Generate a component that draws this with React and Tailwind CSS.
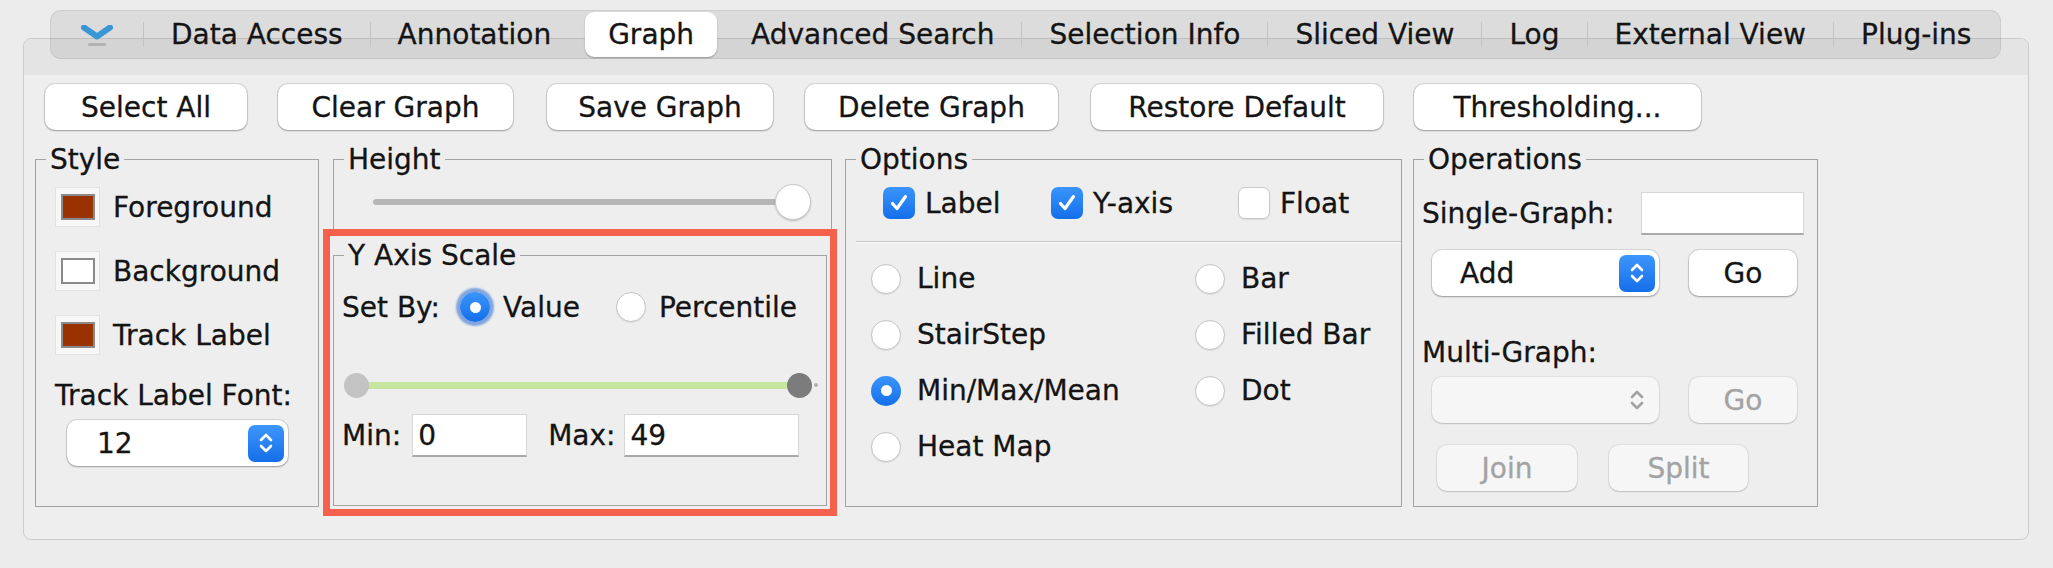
import React from 'react';

const TABS = ['Data Access', 'Annotation', 'Graph', 'Advanced Search', 'Selection Info', 'Sliced View', 'Log', 'External View', 'Plug-ins'];
const ACTIVE_TAB = 'Graph';

const ACTIONS = [
  { label: 'Select All', w: 'w-[202px]', ml: 'ml-0' },
  { label: 'Clear Graph', w: 'w-[235px]', ml: 'ml-[31px]' },
  { label: 'Save Graph', w: 'w-[226px]', ml: 'ml-[34px]' },
  { label: 'Delete Graph', w: 'w-[253px]', ml: 'ml-[32px]' },
  { label: 'Restore Default', w: 'w-[292px]', ml: 'ml-[33px]' },
  { label: 'Thresholding...', w: 'w-[287px]', ml: 'ml-[31px]' },
];

const GRAPH_TYPES = [
  ['Line', 'Bar'],
  ['StairStep', 'Filled Bar'],
  ['Min/Max/Mean', 'Dot'],
  ['Heat Map', null],
];

function Chevron() {
  return (
    <div className="flex flex-col items-center pt-[2px]">
      <svg width="32" height="15" viewBox="0 0 32 15">
        <path d="M3 2.5 L16 11.5 L29 2.5" fill="none" stroke="#3a97d4" strokeWidth="6" strokeLinejoin="round" strokeLinecap="round" />
      </svg>
      <div className="w-[18px] h-[3px] mt-[3px] rounded-full bg-[#b3b3b3]" />
    </div>
  );
}

function Sep() {
  return <div className="w-px h-[25px] bg-[#c3c3c3]" />;
}

function TabBar() {
  const items = [];
  TABS.forEach((t, i) => {
    const afterActive = i > 0 && TABS[i - 1] === ACTIVE_TAB;
    if (t !== ACTIVE_TAB && !afterActive) items.push(<Sep key={'s' + i} />);
    if (t === ACTIVE_TAB) {
      items.push(
        <div key={t} className="mx-[7px] h-[45px] px-[23px] flex items-center rounded-[9px] bg-white shadow-[0_1px_1.5px_rgba(0,0,0,0.3)]">
          {t}
        </div>
      );
    } else {
      items.push(
        <div key={t} className="px-[27px] h-full flex items-center whitespace-nowrap">
          {t}
        </div>
      );
    }
  });
  return (
    <div className="relative z-10 ml-[50px] w-[1951px] h-[49px] rounded-[11px] border border-black/[0.07] bg-black/[0.065] flex items-center">
      <div className="w-[92px] flex justify-center">
        <Chevron />
      </div>
      {items}
    </div>
  );
}

function Button({ children, className = '', disabled = false }) {
  return (
    <div
      className={`h-[46px] flex items-center justify-center rounded-[10px] ${
        disabled
          ? 'bg-[#f6f6f6] text-[#a3a3a3] shadow-[0_0_0_1px_rgba(0,0,0,0.06),0_1px_1.5px_rgba(0,0,0,0.14)]'
          : 'bg-white shadow-[0_0_0_1px_rgba(0,0,0,0.1),0_1px_2px_rgba(0,0,0,0.28)]'
      } ${className}`}
    >
      {children}
    </div>
  );
}

function Stepper({ disabled }) {
  return (
    <svg width="18" height="28" viewBox="0 0 18 28" fill="none" stroke={disabled ? '#a2a2a2' : '#ffffff'} strokeWidth="2.6" strokeLinecap="round" strokeLinejoin="round">
      <path d="M4 11 L9 6 L14 11" />
      <path d="M4 17 L9 22 L14 17" />
    </svg>
  );
}

function Combo({ value, className = '', disabled = false }) {
  return (
    <div
      className={`h-[46px] flex items-center justify-between rounded-[10px] pr-[4px] ${
        disabled
          ? 'bg-[#f6f6f6] shadow-[0_0_0_1px_rgba(0,0,0,0.06),0_1px_1.5px_rgba(0,0,0,0.14)]'
          : 'bg-white shadow-[0_0_0_1px_rgba(0,0,0,0.1),0_1px_2px_rgba(0,0,0,0.28)]'
      } ${className}`}
    >
      <span>{value}</span>
      {disabled ? (
        <div className="w-[36px] h-[37px] flex items-center justify-center">
          <Stepper disabled />
        </div>
      ) : (
        <div className="w-[36px] h-[37px] flex items-center justify-center rounded-[7px] bg-linear-to-b from-[#3d96fb] to-[#146ee9]">
          <Stepper />
        </div>
      )}
    </div>
  );
}

function Swatch({ color }) {
  return (
    <div className="w-[45px] h-[40px] flex items-center justify-center bg-[#f7f7f7] border border-[#e2e2e2]">
      <div className={`w-[34px] h-[26px] border-2 border-[#8a8a8a] ${color}`} />
    </div>
  );
}

function Radio({ checked = false, focused = false }) {
  if (checked) {
    return (
      <div
        className={`w-[30px] h-[30px] shrink-0 rounded-full flex items-center justify-center bg-linear-to-b from-[#3a94fb] to-[#136fea] ${
          focused ? 'shadow-[0_0_2px_4px_rgba(38,105,210,0.55)]' : ''
        }`}
      >
        <div className="w-[11px] h-[11px] rounded-full bg-white" />
      </div>
    );
  }
  return <div className="w-[30px] h-[30px] shrink-0 rounded-full bg-white border border-[#c4c4c4] shadow-[0_1px_1px_rgba(0,0,0,0.08)]" />;
}

function Checkbox({ checked = false }) {
  if (checked) {
    return (
      <div className="w-[32px] h-[32px] shrink-0 rounded-[7px] flex items-center justify-center bg-linear-to-b from-[#3a94fb] to-[#136fea]">
        <svg width="22" height="22" viewBox="0 0 22 22" fill="none" stroke="#fff" strokeWidth="3.2" strokeLinecap="round" strokeLinejoin="round">
          <path d="M4.5 11.5 L9 16.5 L17.5 4.5" />
        </svg>
      </div>
    );
  }
  return <div className="w-[32px] h-[32px] shrink-0 rounded-[7px] bg-white border border-[#c8c8c8] shadow-[0_1px_1px_rgba(0,0,0,0.08)]" />;
}

function TextField({ value = '', className = '' }) {
  return (
    <div className={`h-[43px] bg-white border border-[#d6d6d6] border-b-2 border-b-[#a9a9a9] flex items-center pl-[5px] ${className}`}>
      {value}
    </div>
  );
}

function Group({ title, className = '', children }) {
  return (
    <fieldset className={`border border-[#a3a3a3] min-w-0 ${className}`}>
      <legend className="ml-[10px] px-[4px] leading-[33px]">{title}</legend>
      {children}
    </fieldset>
  );
}

function StyleGroup() {
  const rows = [
    ['Foreground', 'bg-[#993200]'],
    ['Background', 'bg-white'],
    ['Track Label', 'bg-[#993200]'],
  ];
  return (
    <Group title="Style" className="w-[284px] h-[364px]">
      <div className="pl-[19px] pt-[11px] flex flex-col gap-[24px]">
        {rows.map(([label, color]) => (
          <div key={label} className="h-[40px] flex items-center">
            <Swatch color={color} />
            <span className="ml-[13px]">{label}</span>
          </div>
        ))}
      </div>
      <div className="pl-[19px] mt-[24px]">Track Label Font:</div>
      <Combo value="12" className="ml-[31px] mt-[8px] w-[221px] pl-[30px]" />
    </Group>
  );
}

function HeightColumn() {
  return (
    <div className="ml-[14px] w-[499px] h-[364px] flex flex-col">
      <Group title="Height" className="h-[88px]">
        <div className="pt-[8px] pl-[39px] pr-[20px] flex items-center">
          <div className="flex-1 h-[6px] -mr-[18px] rounded-full bg-[#b6b6b6]" />
          <div className="relative w-[36px] h-[36px] rounded-full bg-white border border-[#c9c9c9] shadow-[0_1px_2px_rgba(0,0,0,0.2)]" />
        </div>
      </Group>

      <Group
        title="Y Axis Scale"
        className="mt-[8px] w-[494px] h-[267px] outline-[7px] outline-solid outline-[#f5614c] outline-offset-[3px]"
      >
        <div className="mt-[20px] pl-[8px] h-[30px] flex items-center">
          <span>Set By:</span>
          <div className="ml-[20px]">
            <Radio checked focused />
          </div>
          <span className="ml-[13px]">Value</span>
          <div className="ml-[36px]">
            <Radio />
          </div>
          <span className="ml-[13px]">Percentile</span>
        </div>

        <div className="mt-[50px] ml-[10px] mr-[8px] h-[26px] flex items-center">
          <div className="relative z-10 w-[25px] h-[25px] rounded-full bg-[#c3c3c3]" />
          <div className="flex-1 h-[7px] -mx-[12px] bg-[#c6e59e]" />
          <div className="relative z-10 w-[25px] h-[25px] rounded-full bg-[#7b7b7b]" />
          <div className="ml-[2px] w-[4px] h-[4px] rounded-full bg-[#b0b0b0]" />
        </div>

        <div className="mt-[16px] pl-[8px] flex items-center">
          <span>Min:</span>
          <TextField value="0" className="ml-[11px] w-[115px]" />
          <span className="ml-[21px]">Max:</span>
          <TextField value="49" className="ml-[9px] w-[175px]" />
        </div>
      </Group>
    </div>
  );
}

function OptionsGroup() {
  return (
    <Group title="Options" className="ml-[13px] w-[557px] h-[364px]">
      <div className="mt-[11px] pl-[37px] h-[32px] flex items-center">
        <div className="w-[168px] flex items-center">
          <Checkbox checked />
          <span className="ml-[10px]">Label</span>
        </div>
        <div className="w-[187px] flex items-center">
          <Checkbox checked />
          <span className="ml-[10px]">Y-axis</span>
        </div>
        <div className="flex items-center">
          <Checkbox />
          <span className="ml-[10px]">Float</span>
        </div>
      </div>

      <div className="mt-[22px] ml-[10px] h-px bg-[#c6c6c6] shadow-[0_1px_0_#fafafa]" />

      <div className="mt-[20px] pl-[25px] grid grid-cols-[324px_1fr] gap-y-[23px]">
        {GRAPH_TYPES.flat().map((name, i) =>
          name ? (
            <div key={name} className="h-[33px] flex items-center">
              <Radio checked={name === 'Min/Max/Mean'} />
              <span className="ml-[16px]">{name}</span>
            </div>
          ) : (
            <div key={'empty' + i} />
          )
        )}
      </div>
    </Group>
  );
}

function OperationsGroup() {
  return (
    <Group title="Operations" className="ml-[11px] w-[405px] h-[364px]">
      <div className="mt-[16px] pl-[8px] pr-[13px] flex items-center justify-between">
        <span>Single-Graph:</span>
        <TextField className="w-[163px]" />
      </div>

      <div className="mt-[15px] pl-[18px] flex items-center">
        <Combo value="Add" className="w-[227px] pl-[28px]" />
        <Button className="ml-[30px] w-[108px]">Go</Button>
      </div>

      <div className="mt-[40px] pl-[8px]">Multi-Graph:</div>

      <div className="mt-[8px] pl-[18px] flex items-center">
        <Combo value="" disabled className="w-[227px]" />
        <Button disabled className="ml-[30px] w-[108px]">Go</Button>
      </div>

      <div className="mt-[22px] pl-[23px] flex items-center">
        <Button disabled className="w-[140px]">Join</Button>
        <Button disabled className="ml-[32px] w-[139px]">Split</Button>
      </div>
    </Group>
  );
}

export default function App() {
  return (
    <div className="w-[2053px] h-[568px] overflow-hidden bg-[#ececec] pt-[10px] text-[28px] leading-[33px] text-[#141414] [-webkit-text-stroke:0.3px_currentColor] font-['DejaVu_Sans',sans-serif]">
      <TabBar />

      <div className="-mt-[21px] ml-[23px] w-[2006px] h-[502px] rounded-[8px] border border-[#cbcbcb] bg-[#eeeeee] overflow-hidden">
        <div className="h-[36px] bg-[#e4e4e4]" />

        <div className="pt-[9px] px-[11px]">
          <div className="ml-[10px] flex">
            {ACTIONS.map((a) => (
              <Button key={a.label} className={`${a.w} ${a.ml}`}>
                {a.label}
              </Button>
            ))}
          </div>

          <div className="mt-[13px] flex items-start">
            <StyleGroup />
            <HeightColumn />
            <OptionsGroup />
            <OperationsGroup />
          </div>
        </div>
      </div>
    </div>
  );
}
